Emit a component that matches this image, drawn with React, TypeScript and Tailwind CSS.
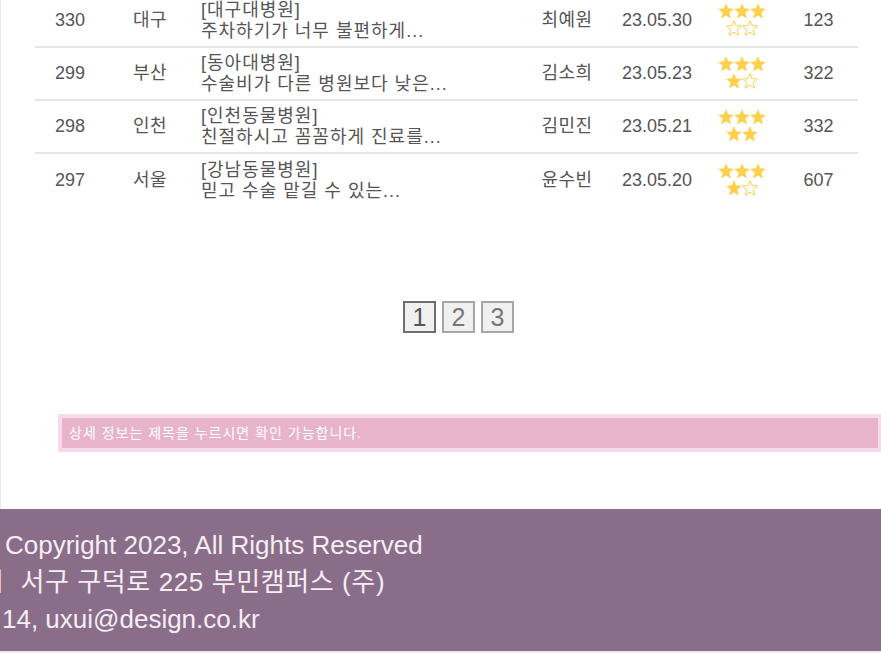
import React from 'react';

type Review = {
  no: number;
  region: string;
  hospital: string;
  summary: string;
  writer: string;
  date: string;
  rating: number;
  views: number;
};

const REVIEWS: Review[] = [
  { no: 330, region: '대구', hospital: '대구대병원', summary: '주차하기가 너무 불편하게...', writer: '최예원', date: '23.05.30', rating: 3, views: 123 },
  { no: 299, region: '부산', hospital: '동아대병원', summary: '수술비가 다른 병원보다 낮은...', writer: '김소희', date: '23.05.23', rating: 4, views: 322 },
  { no: 298, region: '인천', hospital: '인천동물병원', summary: '친절하시고 꼼꼼하게 진료를...', writer: '김민진', date: '23.05.21', rating: 5, views: 332 },
  { no: 297, region: '서울', hospital: '강남동물병원', summary: '믿고 수술 맡길 수 있는...', writer: '윤수빈', date: '23.05.20', rating: 4, views: 607 },
];

const FONT = '[font-family:"Liberation_Sans","Noto_Sans_CJK_KR",sans-serif]';

function Star({ filled }: { filled: boolean }) {
  return (
    <svg viewBox="0 0 24 24" className="w-[16px] h-[16px]">
      <polygon
        points="12,0.8 15.1,8.4 23.4,9 17,14.4 19,22.8 12,18.3 5,22.8 7,14.4 0.6,9 8.9,8.4"
        fill={filled ? '#fdd04c' : 'none'}
        stroke="#fdd04c"
        strokeWidth={filled ? 0.4 : 1.5}
        strokeLinejoin="round"
      />
    </svg>
  );
}

function Rating({ value }: { value: number }) {
  const stars = [0, 1, 2, 3, 4].map((i) => i < value);
  return (
    <div className="flex flex-col items-center gap-[1px] -mt-[2px]">
      <div className="flex">
        {stars.slice(0, 3).map((f, i) => <Star key={i} filled={f} />)}
      </div>
      <div className="flex">
        {stars.slice(3).map((f, i) => <Star key={i} filled={f} />)}
      </div>
    </div>
  );
}

export default function App() {
  return (
    <div className={`w-[881px] h-[653px] overflow-hidden bg-white text-[#555] ${FONT}`}>
      <main className="h-[509px] border-l border-[#efe5eb] overflow-hidden">
        {/* review list */}
        <div className="-mt-[5px] ml-[34px] w-[823px] text-[18px]">
          {REVIEWS.map((r, idx) => (
            <div
              key={r.no}
              className={`flex items-center h-[53px] ${idx < REVIEWS.length - 1 ? 'border-b-2 border-[#e6e6e6]' : ''}`}
            >
              <div className="w-[70px] text-center">{r.no}</div>
              <div className="w-[90px] text-center tracking-[0.5px]">{r.region}</div>
              <div className="w-[330px] pl-[6px] leading-[21px] whitespace-nowrap tracking-[1px]">
                <p>[{r.hospital}]</p>
                <p>{r.summary}</p>
              </div>
              <div className="w-[84px] text-center tracking-[0.5px]">{r.writer}</div>
              <div className="w-[96px] text-center">{r.date}</div>
              <div className="w-[74px] flex justify-center">
                <Rating value={r.rating} />
              </div>
              <div className="w-[79px] text-center">{r.views}</div>
            </div>
          ))}
        </div>

        {/* pagination */}
        <div className="flex gap-[6px] pl-[402px] mt-[94px]">
          {[1, 2, 3].map((p) => (
            <button
              key={p}
              className={`w-[33px] h-[32px] flex items-center justify-center bg-[#f0f0f0] text-[25px] leading-none ${
                p === 1 ? 'border-2 border-[#6e6e6e] text-[#555]' : 'border-2 border-[#a6a6a6] text-[#777]'
              }`}
            >
              {p}
            </button>
          ))}
        </div>

        {/* notice */}
        <div className="ml-[57px] mt-[81px] w-[824px] border-4 border-[#f8dbe8] bg-[#e8b4cb] h-[38px] flex items-center pl-[7px]">
          <p className="text-white text-[14px] tracking-[1px]">상세 정보는 제목을 누르시면 확인 가능합니다.</p>
        </div>
      </main>

      <footer className="h-[142px] bg-[#8a6d89] text-[#f6eef5] text-[26px] leading-[37px] pt-[18px] whitespace-nowrap overflow-hidden">
        <p className="pl-[5px]">Copyright 2023, All Rights Reserved</p>
        <p className="-ml-[118px] tracking-[0.6px]">
          부산광역시<span className="ml-[8px]"> 서구 구덕로 225 부민캠퍼스 (주)</span>
        </p>
        <p className="pl-[2px]">14, uxui@design.co.kr</p>
      </footer>
      <div className="h-[2px] bg-[#ececec]" />
    </div>
  );
}
